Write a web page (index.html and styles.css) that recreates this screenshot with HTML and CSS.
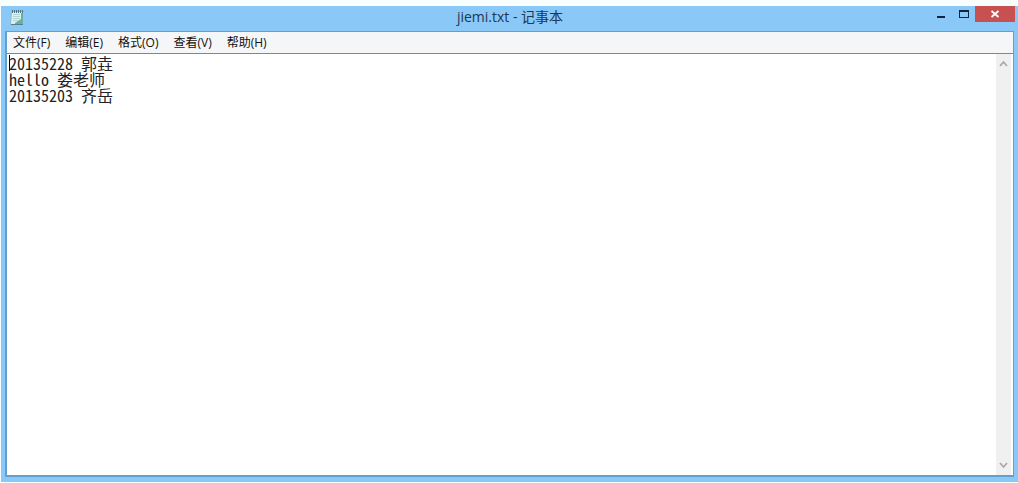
FILE: index.html
```
<!DOCTYPE html>
<html lang="zh-CN">
<head>
<meta charset="utf-8">
<title>jiemi.txt - 记事本</title>
<link rel="stylesheet" href="styles.css">
</head>
<body>
<main class="window">
  <header class="titlebar">
    <svg class="app-icon" width="14" height="17" viewBox="0 0 14 17" aria-hidden="true">
      <path d="M1.500 2.500h11v13h-12z" fill="#d8f0ee" stroke="#8fbcc4"/>
      <path d="M11 4h2v11H5v-1l6-4z" fill="#6eae9f"/>
      <path d="M3 5.500h7M3 7.500h7M3 9.500h7M3 11.500h5" stroke="#b0d8d8"/>
      <path d="M2.500 1v3M4.500 1v3M6.500 1v3M8.500 1v3M10.500 1v3M12.500 1v3" stroke="#4b7585"/>
      <path d="M1 15.500h12" stroke="#597d8f"/>
    </svg>
    <h1 class="title">jiemi.txt - 记事本</h1>
    <div class="controls">
      <button class="control" type="button" aria-label="最小化"><svg width="10" height="10" viewBox="0 0 10 10"><path d="M1 7h8v2H1z" fill="#10253c"/></svg></button>
      <button class="control" type="button" aria-label="最大化"><svg width="10" height="10" viewBox="0 0 10 10"><path d="M0 1h10v8H0zM1 3v5h8V3z" fill="#10253c" fill-rule="evenodd"/></svg></button>
      <button class="control close" type="button" aria-label="关闭"><svg width="10" height="10" viewBox="0 0 10 10"><path d="M1.500 2l7 6M8.500 2l-7 6" stroke="#fff" stroke-width="1.800"/></svg></button>
    </div>
  </header>
  <section class="client">
    <nav class="menu">
      <button class="menu-item" type="button">文件(F)</button>
      <button class="menu-item" type="button">编辑(E)</button>
      <button class="menu-item" type="button">格式(O)</button>
      <button class="menu-item" type="button">查看(V)</button>
      <button class="menu-item" type="button">帮助(H)</button>
    </nav>
    <div class="editor">
      <textarea class="text" aria-label="文本" spellcheck="false">20135228 郭垚
hello 娄老师
20135203 齐岳</textarea>
      <span class="caret"></span>
      <div class="scrollbar">
        <button class="arrow" type="button" aria-label="向上滚动"><svg width="9" height="8" viewBox="0 0 9 8"><path d="M1 6l3.500-4L8 6" fill="none" stroke="#aaa" stroke-width="1.800"/></svg></button>
        <button class="arrow" type="button" aria-label="向下滚动"><svg width="9" height="8" viewBox="0 0 9 8"><path d="M1 2l3.500 4L8 2" fill="none" stroke="#aaa" stroke-width="1.800"/></svg></button>
      </div>
    </div>
  </section>
</main>
</body>
</html>
```
FILE: styles.css
```
* {
  box-sizing: border-box;
}

body {
  margin: 0;
  height: 100vh;
  padding: 6px 0 1px 1px;
  display: flex;
  background: #f8fdfd;
  font-family: "Open Sans", "Noto Sans CJK SC", sans-serif;
}

button {
  margin: 0;
  padding: 0;
  border: 0;
  background: none;
  font: inherit;
  color: inherit;
}

svg {
  display: block;
}

.window {
  flex: 1;
  min-width: 0;
  display: flex;
  flex-direction: column;
  padding: 0 3px 5px 4px;
  background: #8ac8f8;
}

.titlebar {
  height: 25px;
  display: grid;
  grid-template-columns: 1fr auto 1fr;
  align-items: start;
}

.app-icon {
  margin: 3px 0 0 5px;
}

.title {
  margin: 0;
  font-size: 14px;
  font-weight: 400;
  line-height: 22px;
  color: #1d3850;
}

.controls {
  display: flex;
  justify-content: flex-end;
}

.control {
  width: 23px;
  height: 16px;
  display: grid;
  place-items: center;
}

.close {
  width: 40px;
  background: #c75050;
}

.client {
  flex: 1;
  display: flex;
  flex-direction: column;
  margin-right: 1px;
  border: 1px solid #619fcf;
  border-width: 1px 1px 2px 2px;
  background: #fff;
}

.menu {
  height: 22px;
  display: flex;
  gap: 15px;
  padding-left: 6px;
  background: #f5f6f7;
  border-bottom: 1px solid #858585;
}

.menu-item {
  font-size: 12px;
  line-height: 20px;
  color: #111;
}

.editor {
  position: relative;
  flex: 1;
  display: flex;
}

.text {
  flex: 1;
  margin: 0;
  padding: 1px 2px;
  border: 0;
  outline: 0;
  resize: none;
  overflow: hidden;
  background: #fff;
  color: #222;
  font-family: "Noto Sans Mono CJK SC", "Liberation Mono", "Noto Sans CJK SC", monospace;
  font-size: 16px;
  font-weight: 300;
  line-height: 16px;
}

.caret {
  position: absolute;
  left: 2px;
  top: 1px;
  width: 1px;
  height: 16px;
  background: #000;
}

.scrollbar {
  width: 17px;
  display: flex;
  flex-direction: column;
  justify-content: space-between;
  border-right: 2px solid #fff;
  background: #f0f0f0;
}

.arrow {
  height: 20px;
  display: grid;
  place-items: center;
}
```
